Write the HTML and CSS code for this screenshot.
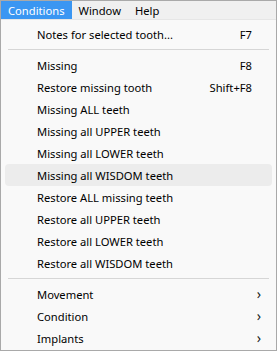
FILE: index.html
```html
<!DOCTYPE html>
<html lang="en">
<head>
    <meta charset="UTF-8">
    <title>Conditions menu</title>
    <link rel="stylesheet" href="styles.css">
</head>
<body>
    <div class="frame">
        <nav class="menubar">
            <span class="menubar-item active">Conditions</span>
            <span class="menubar-item">Window</span>
            <span class="menubar-item">Help</span>
        </nav>

        <ul class="dropdown">
            <li class="item"><span class="label">Notes for selected tooth...</span><span class="key">F7</span></li>
            <li class="separator"></li>
            <li class="item"><span class="label">Missing</span><span class="key">F8</span></li>
            <li class="item"><span class="label">Restore missing tooth</span><span class="key">Shift+F8</span></li>
            <li class="item"><span class="label">Missing ALL teeth</span></li>
            <li class="item"><span class="label">Missing all UPPER teeth</span></li>
            <li class="item"><span class="label">Missing all LOWER teeth</span></li>
            <li class="item hover"><span class="label">Missing all WISDOM teeth</span></li>
            <li class="item"><span class="label">Restore ALL missing teeth</span></li>
            <li class="item"><span class="label">Restore all UPPER teeth</span></li>
            <li class="item"><span class="label">Restore all LOWER teeth</span></li>
            <li class="item"><span class="label">Restore all WISDOM teeth</span></li>
            <li class="separator"></li>
            <li class="item sub"><span class="label">Movement</span><span class="arrow">&#8250;</span></li>
            <li class="item sub"><span class="label">Condition</span><span class="arrow">&#8250;</span></li>
            <li class="item sub"><span class="label">Implants</span><span class="arrow">&#8250;</span></li>
        </ul>
    </div>
</body>
</html>
```

FILE: styles.css
```css
* {
    margin: 0;
    padding: 0;
    box-sizing: border-box;
}

body {
    font-family: "Noto Sans", "Open Sans", sans-serif;
    font-size: 11.2px;
    color: #000;
    background: #fff;
}

.frame {
    width: 277px;
    height: 351px;
    border: 1px solid #a9a9a9;
    background: #f9f9f9;
}

/* Menu bar */
.menubar {
    display: flex;
    height: 19px;
    background: #f0f0f0;
    border-bottom: 1px solid #e6e6e6;
}

.menubar-item {
    display: flex;
    align-items: center;
    padding: 0 7px;
    line-height: 19px;
}

.menubar-item.active {
    background: #3a96f2;
    color: #fff;
}

/* Dropdown */
.dropdown {
    list-style: none;
    padding: 3px 4px 0 4px;
}

.item {
    display: flex;
    align-items: center;
    height: 22px;
    padding: 0 20px 0 32px;
    border-radius: 4px;
}

.item.hover {
    background: #ececec;
}

.label {
    flex: 1;
}

.key {
    text-align: right;
}

.item.sub {
    padding-right: 11px;
}

.arrow {
    font-size: 14px;
    color: #222;
    line-height: 1;
}

.separator {
    height: 1px;
    margin: 4px 3px;
    background: #d6d6d6;
}
```
